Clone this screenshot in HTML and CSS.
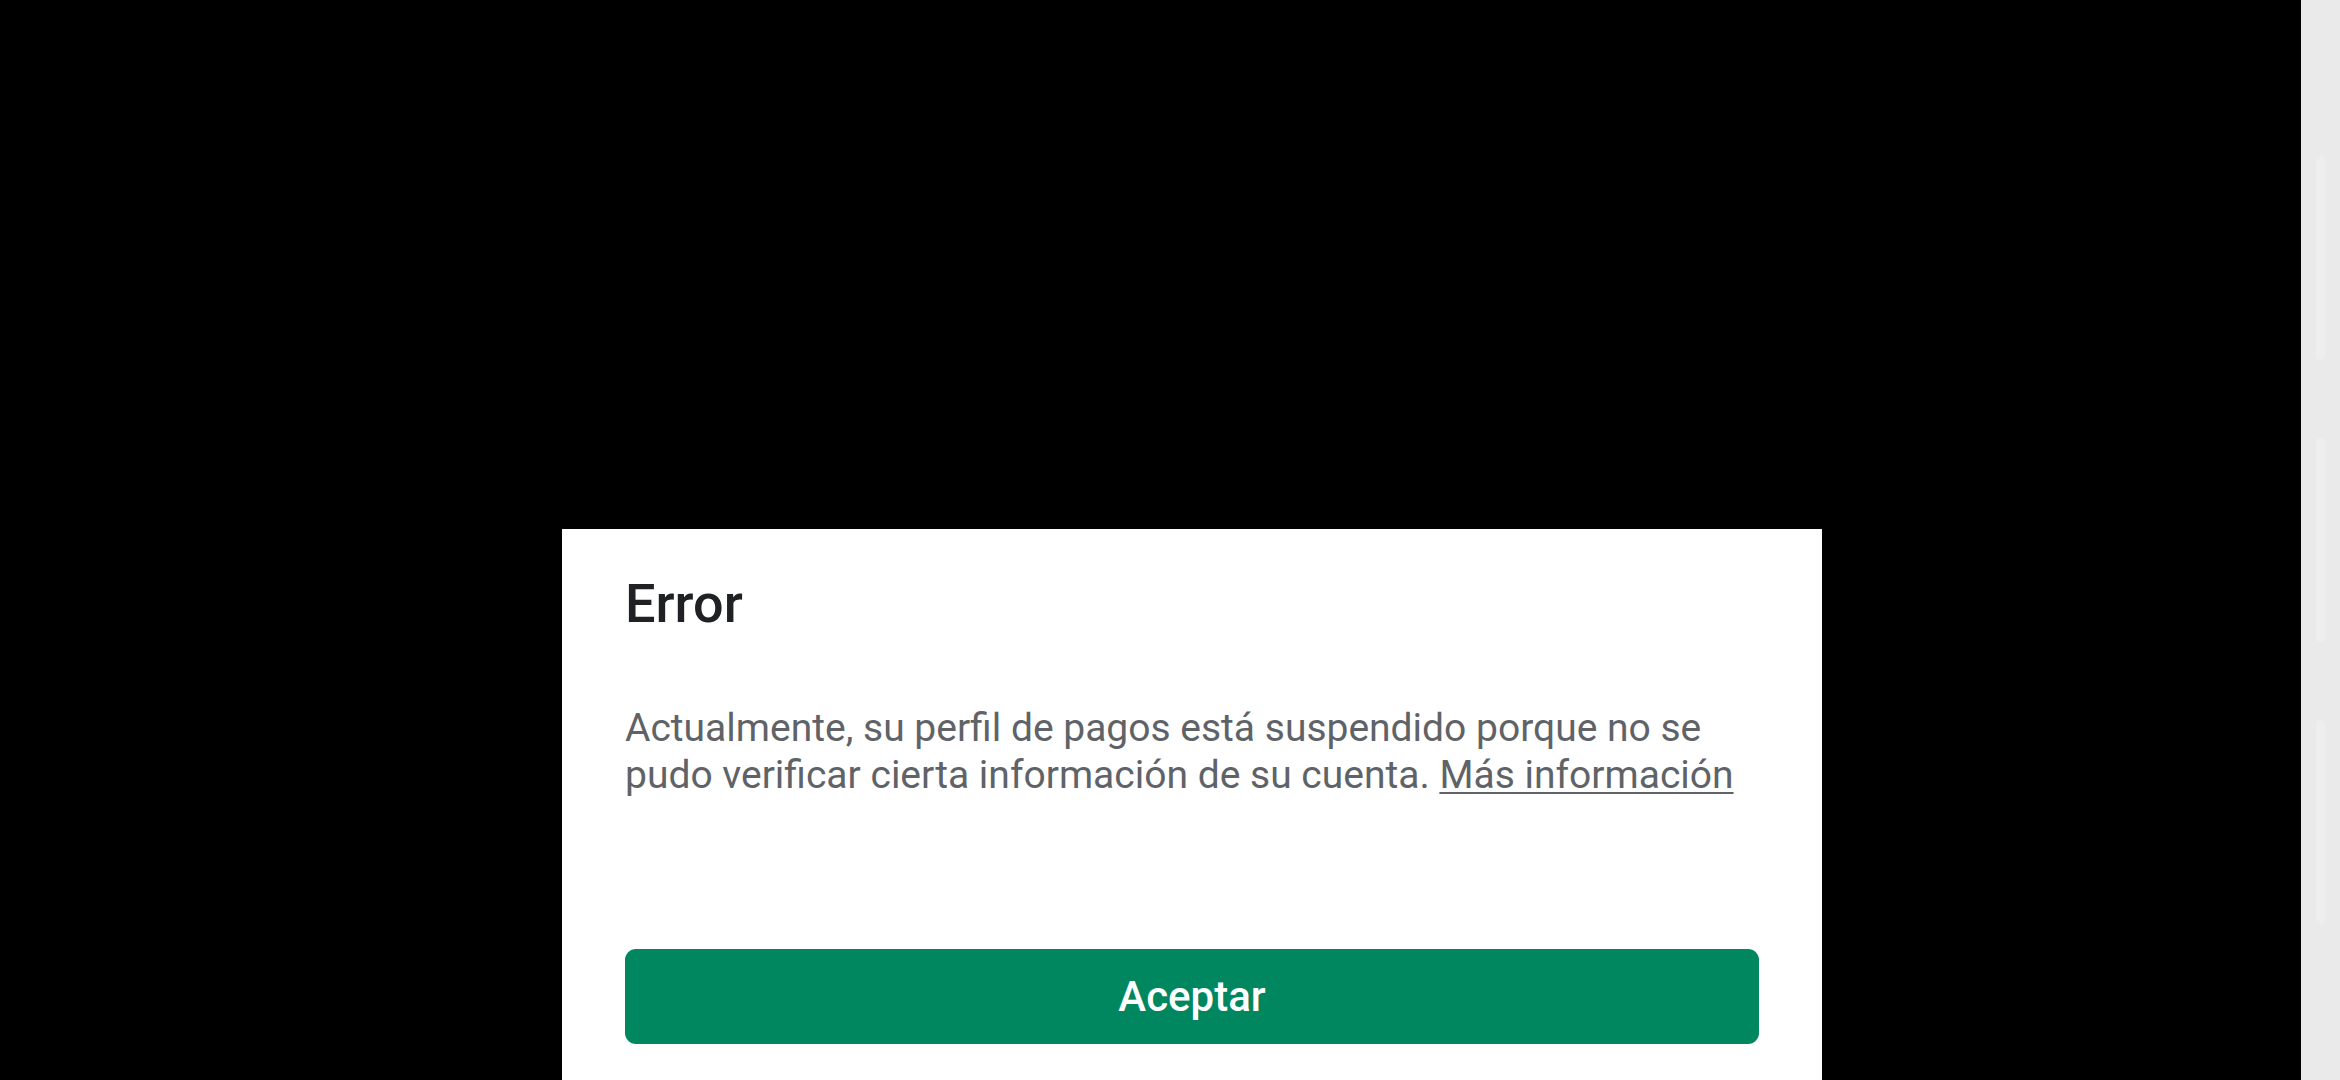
FILE: index.html
```html
<!DOCTYPE html>
<html lang="es">
<head>
    <meta charset="UTF-8">
    <meta name="viewport" content="width=device-width, initial-scale=1.0">
    <title>Error</title>
    <link rel="stylesheet" href="styles.css">
</head>
<body>

<main class="screen">
    <section class="sheet" role="dialog" aria-labelledby="titulo">
        <h1 id="titulo">Error</h1>
        <p>Actualmente, su perfil de pagos está suspendido porque no se pudo verificar cierta información de su cuenta. <a href="#">Más información</a></p>
        <button type="button">Aceptar</button>
    </section>
</main>

<aside class="navbar">
    <span class="bar"></span>
    <span class="bar"></span>
    <span class="bar"></span>
</aside>

</body>
</html>
```
FILE: styles.css
```css
* {
    box-sizing: border-box;
}

body {
    display: flex;
    min-height: 100vh;
    margin: 0;
    background: #000;
    font-family: Roboto, "Liberation Sans", sans-serif;
}

.screen {
    display: flex;
    flex: 1;
    justify-content: center;
    align-items: flex-end;
    padding-left: 83px;
}

.sheet {
    width: 100%;
    max-width: 1260px;
    padding: 45px 63px 36px;
    background: #fff;
}

.sheet h1 {
    margin: 0 0 71px;
    font-size: 54px;
    font-weight: 500;
    line-height: 60px;
    color: #202124;
}

.sheet p {
    margin: 0 0 150px;
    font-size: 39px;
    line-height: 47px;
    color: #5f6368;
}

.sheet a {
    color: inherit;
    text-decoration-thickness: 2px;
    text-underline-offset: 4px;
}

.sheet button {
    display: block;
    width: 100%;
    height: 95px;
    border: none;
    border-radius: 11px;
    background: #01875f;
    color: #fff;
    font-family: inherit;
    font-size: 42px;
    font-weight: 500;
    cursor: pointer;
}

/* Barra de navegación lateral */
.navbar {
    display: flex;
    flex-direction: column;
    justify-content: center;
    align-items: center;
    gap: 78px;
    width: 39px;
    background: #eaeaea;
}

.bar {
    width: 9px;
    height: 204px;
    border-radius: 5px;
    background: #eee;
}
```
